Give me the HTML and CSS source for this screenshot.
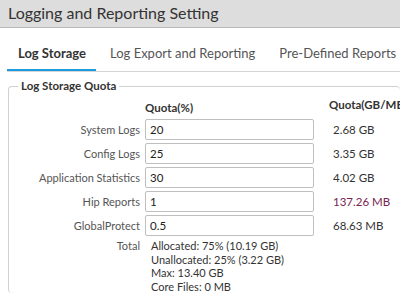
FILE: index.html
```html
<!DOCTYPE html>
<html>
<head>
<meta charset="utf-8">
<link rel="stylesheet" href="styles.css">
</head>
<body>
<div class="titlebar">Logging and Reporting Setting</div>
<div class="tabs">
  <div class="tab active">Log Storage</div>
  <div class="sep"></div>
  <div class="tab">Log Export and Reporting</div>
  <div class="sep"></div>
  <div class="tab">Pre-Defined Reports</div>
</div>
<fieldset class="quota">
  <legend>Log Storage Quota</legend>
  <div class="grid">
    <div></div>
    <div class="head">Quota(%)</div>
    <div class="head gb">Quota(GB/MB)</div>

    <div class="label">System Logs</div>
    <div class="field">20</div>
    <div class="val">2.68 GB</div>

    <div class="label">Config Logs</div>
    <div class="field">25</div>
    <div class="val">3.35 GB</div>

    <div class="label">Application Statistics</div>
    <div class="field">30</div>
    <div class="val">4.02 GB</div>

    <div class="label">Hip Reports</div>
    <div class="field">1</div>
    <div class="val warn">137.26 MB</div>

    <div class="label">GlobalProtect</div>
    <div class="field">0.5</div>
    <div class="val">68.63 MB</div>

    <div class="label total">Total</div>
    <div class="totals">
      <div>Allocated: 75% (10.19 GB)</div>
      <div>Unallocated: 25% (3.22 GB)</div>
      <div>Max: 13.40 GB</div>
      <div>Core Files: 0 MB</div>
    </div>
  </div>
</fieldset>
</body>
</html>
```
FILE: styles.css
```css
html, body {
  margin: 0;
  padding: 0;
  background: #fff;
  overflow: hidden;
}
body {
  width: 400px;
  height: 294px;
  font-family: Lato, "Open Sans", sans-serif;
  color: #333;
}
.titlebar {
  height: 28px;
  box-sizing: border-box;
  background: #dddddd;
  border-bottom: 1px solid #b8b8b8;
  font-size: 16px;
  line-height: 26px;
  padding-left: 8px;
  color: #333;
}
.tabs {
  display: flex;
  align-items: flex-start;
  margin: 12px 0 0 7px;
  border-bottom: 1px solid #d4d4d4;
  white-space: nowrap;
}
.tab {
  font-size: 13px;
  color: #555;
  padding: 0 10px;
  height: 31px;
  line-height: 26px;
  box-sizing: border-box;
}
.tab.active {
  font-weight: bold;
  color: #333;
  border-bottom: 2px solid #1a9be0;
  padding-left: 11px;
}
.sep {
  width: 1px;
  height: 14px;
  background: #ccc;
  margin: 6px 2px 0;
}
.quota {
  margin: 7px 0 0 8px;
  padding: 0;
  border: 1px solid #d0d0d0;
  border-radius: 4px;
  border-right: none;
  border-bottom: none;
  min-width: 0;
}
.quota legend {
  font-size: 11.5px;
  font-weight: bold;
  color: #333;
  padding: 0 3px;
  margin-left: 9px;
  line-height: 14px;
}
.grid {
  display: grid;
  grid-template-columns: 131px 169px auto;
  column-gap: 5px;
  row-gap: 3px;
  font-size: 11px;
  white-space: nowrap;
  padding-top: 7px;
}
.head {
  font-weight: bold;
  font-size: 11.5px;
  color: #333;
  height: 16px;
  line-height: 16px;
}
.head.gb {
  margin-left: 10px;
  margin-top: -3px;
}
.label {
  text-align: right;
  color: #555;
  line-height: 21px;
}
.field {
  height: 21px;
  box-sizing: border-box;
  border: 1px solid #bfbfbf;
  border-radius: 2px;
  padding-left: 4px;
  line-height: 19px;
  font-size: 11.5px;
  color: #222;
}
.val {
  line-height: 21px;
  padding-left: 14px;
  font-size: 11.5px;
  color: #333;
}
.val.warn {
  color: #7b2452;
}
.label.total {
  line-height: 13.6px;
}
.totals {
  grid-column: 2 / 4;
  line-height: 13.6px;
  padding-left: 6px;
  color: #333;
}
```
